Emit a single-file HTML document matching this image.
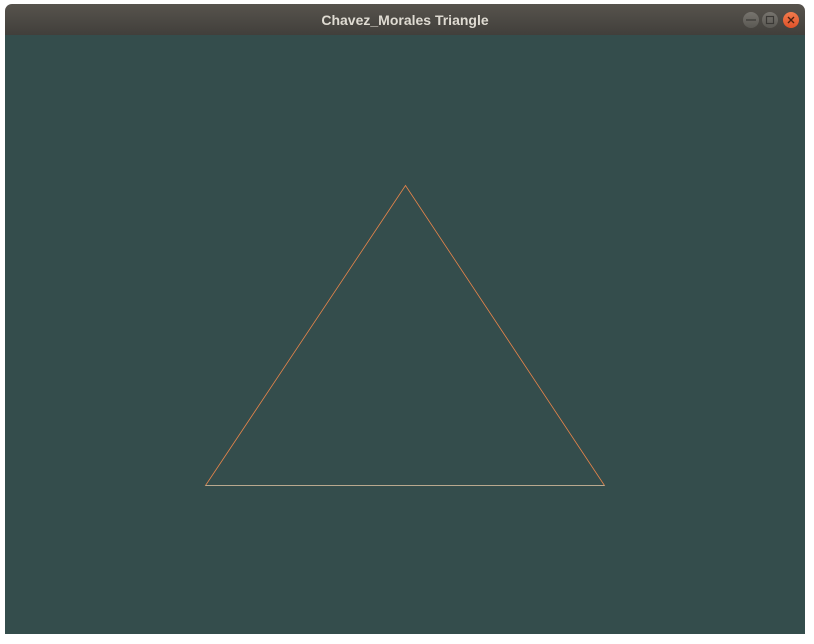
<!DOCTYPE html>
<html><head><style>
html,body{margin:0;padding:0;width:814px;height:644px;background:#fff;overflow:hidden}
.win{position:absolute;left:5px;top:4px;width:800px;height:630px;}
.tb{position:absolute;left:0;top:0;width:800px;height:31px;background:linear-gradient(#57534d,#413f3b);border-radius:7px 7px 0 0;}
.t{position:absolute;left:0;width:800px;top:8px;text-align:center;color:#dfdbd2;font:bold 14px "Liberation Sans",sans-serif;}
.c{position:absolute;left:0;top:31px;width:800px;height:599px;background:#344d4c;}
.b{position:absolute;top:8px;width:16px;height:16px;border-radius:50%;background:linear-gradient(#77746e,#5a5853);}
</style></head><body>
<div class="win">
<div class="tb"><div class="t">Chavez_Morales Triangle</div>
<div class="b" style="left:738px"></div>
<div class="b" style="left:757px"></div>
<div class="b" style="left:778px;background:linear-gradient(#f27a4c,#e0522a)"></div>
<svg style="position:absolute;left:0;top:0" width="800" height="31">
<line x1="741" y1="16" x2="751" y2="16" stroke="#3a3835" stroke-width="1.2"/>
<rect x="761.5" y="12.5" width="7" height="7" fill="none" stroke="#3a3835" stroke-width="1.2"/>
<path d="M783 13L789 19M789 13L783 19" stroke="#4a2010" stroke-width="1.4"/>
</svg></div>
<div class="c"></div>
</div>
<svg style="position:absolute;left:0;top:0" width="814" height="644">
<path d="M405.5 185.5L604.5 485.5L205.5 485.5Z" fill="none" stroke="#e8854a" stroke-width="0.8"/>
<line x1="205.5" y1="485.5" x2="604.5" y2="485.5" stroke="#b9a98f" stroke-width="0.9"/>
</svg>
</body></html>
